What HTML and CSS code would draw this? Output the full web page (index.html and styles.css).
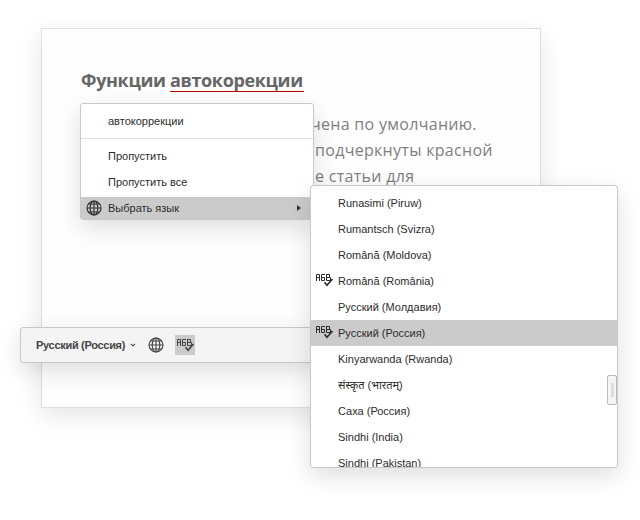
FILE: index.html
```html
<!DOCTYPE html>
<html lang="ru">
<head>
<meta charset="utf-8">
<title>Автокоррекция</title>
<link rel="stylesheet" href="styles.css">
</head>
<body>
<svg class="defs" width="0" height="0" aria-hidden="true">
  <symbol id="globe" viewBox="0 0 16 16">
    <g fill="none" stroke="currentColor" stroke-width="1.1">
      <circle cx="8" cy="8" r="7"/>
      <ellipse cx="8" cy="8" rx="3.8" ry="7"/>
      <path d="M8 1v14M1 8h14M2.500 4h11M2.500 12h11"/>
    </g>
  </symbol>
  <symbol id="spell" viewBox="0 0 18 14">
    <g fill="none" stroke="currentColor">
      <path d="M.5 8V1.500H3.500V8M.5 4.500H3.500M9 1.500H5.500V7.500H8.500V4.500H5.500M10.500 1V7.500H14.500V4.500H10.500M10.500 1.500H13.500V4.500"/>
      <path stroke-width="1.700" d="M8.500 9.300l2.500 3L16.500 6"/>
    </g>
  </symbol>
</svg>
<main class="desk">
  <article class="page">
    <h1 class="title">Функции <span class="error">автокорекции</span></h1>
    <p class="body-text"><span class="l1">чена по умолчанию.</span><span class="l2">подчеркнуты красной</span><span class="l3">е статьи для</span></p>
  </article>
  <footer class="status">
    <b class="lang">Русский (Россия)</b>
    <svg class="chevron" viewBox="0 0 6 4"><path d="M1 .8l2 2 2-2" fill="none" stroke="currentColor" stroke-width="1.100"/></svg>
    <svg class="globe"><use href="#globe"/></svg>
    <span class="spell-button"><svg class="spell"><use href="#spell"/></svg></span>
  </footer>
  <nav class="menu">
    <div class="item first">автокоррекции</div>
    <div class="item">Пропустить</div>
    <div class="item">Пропустить все</div>
    <div class="item active"><svg class="globe"><use href="#globe"/></svg>Выбрать язык<i class="arrow"></i></div>
  </nav>
  <section class="languages">
    <div class="row">Runasimi (Piruw)</div>
    <div class="row">Rumantsch (Svizra)</div>
    <div class="row">Română (Moldova)</div>
    <div class="row"><svg class="spell"><use href="#spell"/></svg>Română (România)</div>
    <div class="row">Русский (Молдавия)</div>
    <div class="row selected"><svg class="spell"><use href="#spell"/></svg>Русский (Россия)</div>
    <div class="row">Kinyarwanda (Rwanda)</div>
    <div class="row hindi">संस्कृत (भारतम्)</div>
    <div class="row">Саха (Россия)</div>
    <div class="row">Sindhi (India)</div>
    <div class="row">Sindhi (Pakistan)</div>
    <span class="thumb"></span>
  </section>
</main>
</body>
</html>
```
FILE: styles.css
```css
* { box-sizing: border-box; }
body { margin: 0; background: #fff; }
.defs { position: absolute; }
.desk {
  position: relative;
  width: 640px;
  height: 520px;
  overflow: hidden;
  font: 11px/26px "Liberation Sans", Arial, sans-serif;
  color: #2c2c2c;
}
.page, .status, .menu, .languages { position: absolute; }
.page {
  left: 41px; top: 28px;
  width: 500px; height: 380px;
  padding: 39px 0 0 39px;
  background: #fefefe;
  border: 1px solid #dedede;
  box-shadow: 0 8px 24px rgba(0, 0, 0, .1);
  font-family: "Open Sans", sans-serif;
}
.title {
  margin: 0;
  font-size: 18px;
  line-height: 25px;
  font-weight: 700;
  letter-spacing: -.35px;
  color: #666;
  white-space: nowrap;
}
.error { display: inline-block; height: 24px; padding-right: 1px; border-bottom: 1px solid #c00000; }
.body-text {
  margin: 18px 0 0 225px;
  font-size: 16px;
  line-height: 26px;
  letter-spacing: .3px;
  color: #808080;
  white-space: nowrap;
}
.body-text span { display: block; }
.l1 { padding-left: 5px; }
.l2 { padding-left: 9px; }
.l3 { padding-left: 9px; }
.status {
  left: 20px; top: 327px;
  width: 300px; height: 36px;
  display: flex;
  align-items: center;
  padding-left: 15px;
  background: #f4f4f4;
  border: 1px solid #c8c8c8;
  border-radius: 3px;
  box-shadow: 0 8px 24px rgba(0, 0, 0, .13);
  color: #444;
}
.lang { white-space: nowrap; width: 90px; letter-spacing: -.3px; }
.chevron { width: 6px; height: 4px; margin: 0 12px 0 4px; }
.globe { width: 16px; height: 16px; flex: none; }
.spell { width: 18px; height: 14px; flex: none; }
.spell-button {
  width: 20px; height: 20px;
  margin-left: 11px;
  padding: 3px 0 0 2px;
  background: #cbcbcb;
  display: flex;
}
.menu {
  left: 80px; top: 103px;
  width: 234px; height: 117px;
  background: #fff;
  border: 1px solid #c8c8c8;
  border-radius: 3px;
  box-shadow: 0 8px 24px rgba(0, 0, 0, .13);
}
.item { display: flex; align-items: center; height: 26px; padding-left: 27px; }
.item.first { height: 35px; border-bottom: 1px solid #dedede; margin-bottom: 4px; }
.item.active { height: 22px; margin-top: 2px; padding-left: 5px; background: #cbcbcb; border-radius: 0 0 2px 2px; }
.item.active .globe { margin-right: 6px; }
.arrow { margin: 0 12px 0 auto; border: 3px solid transparent; border-left: 4px solid #333; border-right: 0; }
.languages {
  left: 310px; top: 185px;
  width: 308px; height: 283px;
  padding-top: 4px;
  background: #fff;
  border: 1px solid #c8c8c8;
  border-radius: 3px;
  box-shadow: 0 8px 24px rgba(0, 0, 0, .13);
  overflow: hidden;
}
.row { display: flex; height: 26px; padding-left: 27px; white-space: nowrap; }
.row .spell { margin: 5px 4px 0 -22px; }
.selected { background: #cbcbcb; }
.hindi { font-family: "Liberation Sans", "Noto Sans Devanagari", "Noto Sans", sans-serif; }
.thumb {
  position: absolute;
  right: 0; top: 189px;
  width: 10px; height: 30px;
  border: 1px solid #bbb;
  border-radius: 2px;
  background: linear-gradient(#ddd, #ddd) center / 3px 14px no-repeat #f5f5f5;
}
```
